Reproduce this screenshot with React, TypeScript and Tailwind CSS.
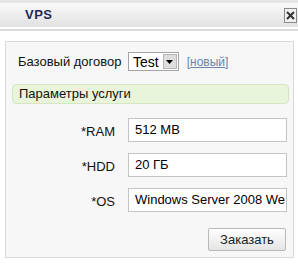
const fields = [
  { label: "*RAM", value: "512 MB" },
  { label: "*HDD", value: "20 ГБ" },
  { label: "*OS", value: "Windows Server 2008 We" },
];

export default function App() {
  return (
    <div className="w-[298px] h-[276px] bg-white overflow-hidden font-['Liberation_Sans',Arial,sans-serif] text-[13px] text-[#111]">
      {/* title bar */}
      <div className="h-[3px] bg-[#e6e6e6]" />
      <div className="h-[24px] flex items-center bg-gradient-to-b from-[#fafafa] to-[#e1e1e1]">
        <span className="ml-[25px] font-bold text-[13px] text-[#1d2b57] tracking-[0.5px]">VPS</span>
        <button className="ml-auto mr-[1px] w-[13px] h-[15px] border border-[#8a8a8a] bg-[#f0f0f0] flex items-center justify-center">
          <svg width="9" height="9" viewBox="0 0 9 9">
            <path d="M1 1 L8 8 M8 1 L1 8" stroke="#333" strokeWidth="2" />
          </svg>
        </button>
      </div>
      <div className="h-[2px] bg-white" />
      <div className="h-[2px] bg-[#dadada]" />

      {/* panel */}
      <div className="mt-[10px] ml-[5px] w-[289px] border border-[#d9d9d9] bg-[#f7f7f7] pt-[10px] pb-[6px] px-[6px] flex flex-col">
        <div className="flex items-center h-[19px]">
          <span className="ml-[6px] w-[110px]">Базовый договор</span>
          <div className="flex items-center h-[19px] border border-[#a5a5a5] bg-white pl-[4px]">
            <span className="text-[14px] leading-none text-black">Test</span>
            <span className="ml-[4px] mr-[1px] w-[14px] h-[15px] bg-[#dedede] border border-[#b5b5b5] flex items-center justify-center">
              <svg width="7" height="4" viewBox="0 0 7 4">
                <path d="M0 0 H7 L3.5 4 Z" fill="#000" />
              </svg>
            </span>
          </div>
          <a className="ml-[8px] text-[12px] text-[#6c84a8] underline">[новый]</a>
        </div>

        <div className="mt-[13px] w-[277px] h-[20px] border border-[#d6e6c3] bg-[#e9f5da] rounded-[4px] flex items-center pl-[6px]">
          Параметры услуги
        </div>

        <div className="mt-[14px] flex flex-col gap-[11px]">
          {fields.map((f) => (
            <div key={f.label} className="flex items-center">
              <span className="w-[103px] text-right pt-[3px]">{f.label}</span>
              <div className="ml-[13px] w-[159px] h-[24px] border border-[#c4c4c4] bg-white pl-[6px] flex items-center overflow-hidden whitespace-nowrap text-black">
                {f.value}
              </div>
            </div>
          ))}
        </div>

        <div className="mt-[16px] flex justify-end pr-[1px]">
          <button className="w-[78px] h-[23px] border border-[#b9b9b9] rounded-[2px] bg-gradient-to-b from-[#ffffff] to-[#e4e4e4] text-[13px] text-[#222]">
            Заказать
          </button>
        </div>
      </div>
    </div>
  );
}
